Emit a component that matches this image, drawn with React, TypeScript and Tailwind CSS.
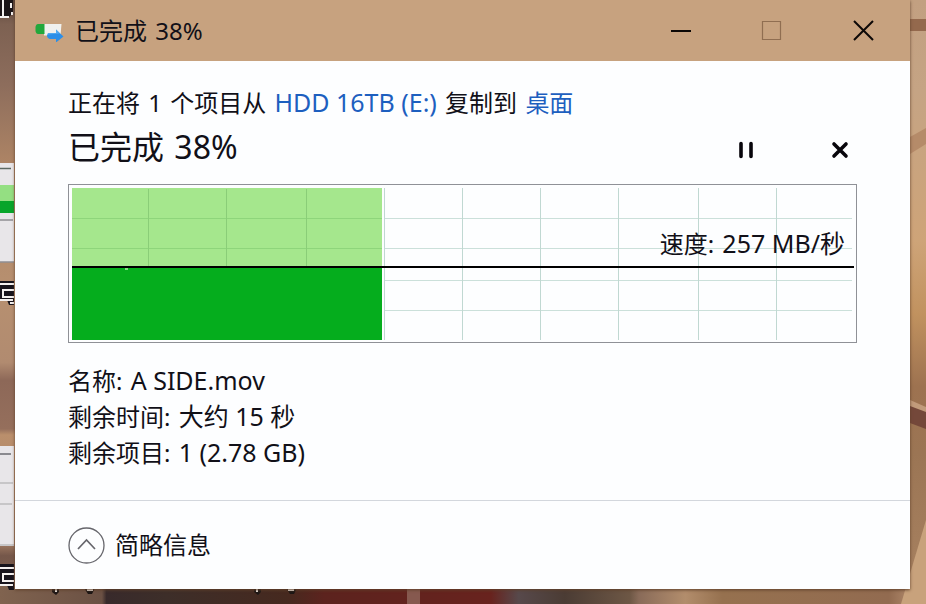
import { useState } from "react";

const details = [
  { label: "名称:", value: "A SIDE.mov" },
  { label: "剩余时间:", value: "大约 15 秒" },
  { label: "剩余项目:", value: "1 (2.78 GB)" },
];

const gridX = [80, 158, 238, 316, 394, 472, 550, 630, 708];
const gridY = [34, 64, 96, 126];

const Wallpaper = () => (
  <svg
    className="absolute inset-0 h-full w-full"
    viewBox="0 0 926 604"
    preserveAspectRatio="xMinYMin slice"
    aria-hidden="true"
  >
    <defs>
      <linearGradient id="left" x1="0" y1="0" x2="0" y2="1">
        <stop offset="0" stopColor="#5a4238" />
        <stop offset="0.04" stopColor="#7d6152" />
        <stop offset="0.14" stopColor="#8d6d5c" />
        <stop offset="0.27" stopColor="#ad8465" />
        <stop offset="0.48" stopColor="#b79070" />
        <stop offset="0.6" stopColor="#b18b70" />
        <stop offset="0.63" stopColor="#8d6858" />
        <stop offset="0.71" stopColor="#956f5c" />
        <stop offset="0.72" stopColor="#ba8f6c" />
        <stop offset="0.9" stopColor="#a07a62" />
        <stop offset="0.92" stopColor="#75574a" />
        <stop offset="1" stopColor="#80634f" />
      </linearGradient>
      <linearGradient id="right" x1="0" y1="0" x2="0" y2="1">
        <stop offset="0" stopColor="#c2a081" />
        <stop offset="0.15" stopColor="#c5a484" />
        <stop offset="0.4" stopColor="#cea478" />
        <stop offset="0.52" stopColor="#c1925f" />
        <stop offset="0.64" stopColor="#9d7250" />
        <stop offset="0.75" stopColor="#9b7554" />
        <stop offset="1" stopColor="#a98362" />
      </linearGradient>
      <linearGradient id="bottom">
        <stop offset="0" stopColor="#80634f" />
        <stop offset="0.11" stopColor="#6b5144" />
        <stop offset="0.115" stopColor="#382a2b" />
        <stop offset="0.18" stopColor="#3d2e29" />
        <stop offset="0.31" stopColor="#46291f" />
        <stop offset="0.35" stopColor="#5c231e" />
        <stop offset="0.53" stopColor="#68231e" />
        <stop offset="0.56" stopColor="#57494b" />
        <stop offset="0.61" stopColor="#4b3c34" />
        <stop offset="0.68" stopColor="#6d5745" />
        <stop offset="0.69" stopColor="#896b59" />
        <stop offset="0.74" stopColor="#b28d6c" />
        <stop offset="0.78" stopColor="#96714f" />
        <stop offset="0.96" stopColor="#926b50" />
        <stop offset="1" stopColor="#c39c7c" />
      </linearGradient>
    </defs>
    <rect width="463" height="604" fill="url(#left)" />
    <rect x="463" width="463" height="604" fill="url(#right)" />
    <rect y="586" width="926" height="18" fill="url(#bottom)" />
    <rect x="407" y="588" width="13" height="16" fill="#86594f" />

    {/* right edge */}
    <path d="M910 19h16v12h-16z" fill="#94694d" />
    <path d="M910 137l16-9v16l-16 10z" fill="#b58b69" />
    <path d="M910 400l16 7v8l-16-6z" fill="#c19b7b" />
    <path d="M910 406l16 6v17l-16-6z" fill="#74483a" />
    <path d="M926 520v84h-25z" fill="#c8a27c" />

    {/* thumbnails under the window */}
    <path d="M0 163h14v99H0z" fill="#e8e6e9" />
    <path d="M0 168.500h11" stroke="#5c6862" strokeWidth="1.500" />
    <path d="M0 185h14v16H0z" fill="#94df82" />
    <path d="M0 201h14v12H0z" fill="#07a52a" />
    <path d="M0 220h13M0 262h14" stroke="#8f8f93" strokeWidth="1.500" />
    <path d="M0 446h14v100H0z" fill="#e8e6e9" />
    <path d="M0 454h11" stroke="#6b6b70" strokeWidth="1.500" />
    <path d="M0 483h13M0 504h12M0 545h14" stroke="#a5a5a8" strokeWidth="1.200" />

    {/* icon captions cut off by the window */}
    <path d="M0 0h13v13l-5 5H0z" fill="#1b1518" />
    <path d="M3 0v16M0 17h9M11 3v5M12 12v3" stroke="#f4f1f0" strokeWidth="2" fill="none" />
    <path d="M0 281h14v24H9l-2-5H0z" fill="#17141c" />
    <path d="M0 284h14M14 290H3v7h11M0 300h13M10 303h4" stroke="#f4f1f0" strokeWidth="2" fill="none" />
    <path d="M0 564h14v26H9l-2-5H0z" fill="#17141c" />
    <path d="M0 568h14M14 574H3v7h11M0 585h13" stroke="#f4f1f0" strokeWidth="2" fill="none" />
    <path d="M52 588h7v4l-3 3-4-3zM84 588h11l-3 6h-4zM254 588h7v4l-3 3-4-3zM286 588h11l-3 6h-4z" fill="#1c1615" />
    <path d="M56 588v4M87 590h6M257 588v4M288 590h6" stroke="#eee9e4" strokeWidth="2" />
  </svg>
);

const CopyIcon = () => (
  <svg width="30" height="22" viewBox="0 0 30 22" aria-hidden="true">
    <path d="M9 4h17.500l-1 11.500H9z" fill="#f0f1ef" />
    <path d="M3 4h6.500v10H3Q1 14 0.500 11V7Q1 4 3 4z" fill="#22a83c" />
    <path d="M13 13h8V9.500l7.500 7-7.500 6V19h-6Q12 18 12 15.500z" fill="#2c8fe8" />
    <path d="M13 13h8V9.500l4 4-12 1z" fill="#52a9ee" />
  </svg>
);

const SpeedChart = () => (
  <div className="relative">
    <svg
      className="block h-[159px] w-full"
      viewBox="0 0 789 159"
      preserveAspectRatio="none"
      role="img"
      aria-label="速度"
    >
      <rect x="0.500" y="0.500" width="788" height="158" fill="#fdfeff" stroke="#8f9197" />
      {gridY.map((y) => (
        <path key={y} d={`M317 ${y + 0.5}H784`} stroke="#cbe0da" />
      ))}
      {gridX.slice(3).map((x) => (
        <path key={x} d={`M${x + 0.5} 4V156`} stroke="#c0d8d2" />
      ))}
      <rect x="4" y="4" width="310" height="79" fill="#a5e78d" />
      {gridY.slice(0, 2).map((y) => (
        <path key={y} d={`M4 ${y + 0.5}H314`} stroke="#8ed57b" />
      ))}
      {gridX.slice(0, 3).map((x) => (
        <path key={x} d={`M${x + 0.5} 5V82`} stroke="#8acd78" />
      ))}
      <rect x="4" y="83" width="310" height="73" fill="#05ad1d" />
      <path d="M4 83H786" stroke="#000" strokeWidth="2" />
      <path d="M57 85h3" stroke="#85dc83" strokeWidth="2" />
    </svg>
    <p className="absolute right-3 top-11 leading-8">
      速度: <span className="ml-0.5 text-[25px] leading-none">257 MB/秒</span>
    </p>
  </div>
);

const App = () => {
  const [expanded, setExpanded] = useState(true);
  const [paused, setPaused] = useState(false);

  return (
    <main className="relative min-h-screen overflow-hidden pb-[15px] pl-[15px] pr-4 font-['Noto_Sans','Noto_Sans_CJK_SC',sans-serif] text-2xl text-[#111018]">
      <Wallpaper />
      <section className="relative bg-[#fdfeff] shadow-[0_1px_3px_#60402a]">
        <header className="flex h-[61px] items-center bg-[#c7a27f] pl-5">
          <CopyIcon />
          <h1 className="ml-2.5 flex-1 leading-8">
            已完成 <span className="ml-0.5">38%</span>
          </h1>
          <div className="flex">
            <button aria-label="最小化" className="flex h-[61px] w-[92px] items-center justify-center">
              <svg width="22" height="22" viewBox="0 0 22 22">
                <path d="M2 11h20" stroke="#0c0806" strokeWidth="2" />
              </svg>
            </button>
            <button aria-label="最大化" disabled className="flex h-[61px] w-[92px] items-center justify-center">
              <svg width="22" height="22" viewBox="0 0 22 22" fill="none">
                <path d="M1.500 1.500h18v18h-18z" stroke="#906e51" strokeWidth="1.200" />
              </svg>
            </button>
            <button aria-label="关闭" className="flex h-[61px] w-[92px] items-center justify-center">
              <svg width="22" height="22" viewBox="0 0 22 22">
                <path d="M1 1l19 19M20 1L1 20" stroke="#0c0806" strokeWidth="2" />
              </svg>
            </button>
          </div>
        </header>

        <div className="px-[53px] pb-[29px] pt-6">
          <p className="leading-9">
            正在将 <span className="mx-0.5">1</span> 个项目从{" "}
            <a href="#source" className="mx-0.5 text-[25px] leading-none text-[#1d5fbf]">HDD 16TB (E:)</a> 复制到{" "}
            <a href="#desktop" className="ml-0.5 text-[#1d5fbf]">桌面</a>
          </p>
          <div className="mb-3 flex h-[51px] items-end">
            <h2 className="flex-1 text-[32px] leading-[51px]">
              已完成 <span className="ml-0.5">38%</span>
            </h2>
            <button
              aria-label={paused ? "继续" : "暂停"}
              onClick={() => setPaused(!paused)}
              className="flex h-[45px] w-[34px] items-center justify-center"
            >
              <svg width="16" height="18" viewBox="0 0 16 18">
                {paused ? (
                  <path d="M2 1l13 8-13 8z" fill="#08060c" />
                ) : (
                  <path d="M3 2.500v13M13 2.500v13" stroke="#08060c" strokeWidth="3.600" strokeLinecap="round" />
                )}
              </svg>
            </button>
            <button aria-label="取消" className="ml-15 flex h-[45px] w-[34px] items-center justify-center">
              <svg width="18" height="18" viewBox="0 0 18 18">
                <path d="M3 3l12 12M15 3L3 15" stroke="#08060c" strokeWidth="3.600" strokeLinecap="round" />
              </svg>
            </button>
          </div>
          <SpeedChart />
          {expanded && (
            <ul className="mt-5 leading-9">
              {details.map((d) => (
                <li key={d.label}>
                  {d.label} <span className="ml-0.5 text-[25px] leading-none">{d.value}</span>
                </li>
              ))}
            </ul>
          )}
        </div>

        <footer className="flex h-[89px] items-center border-t border-[#d3d7dd] px-[53px]">
          <button onClick={() => setExpanded(!expanded)} className="flex items-center gap-2.5">
            <svg
              width="37"
              height="37"
              viewBox="0 0 37 37"
              fill="none"
              className={expanded ? "" : "rotate-180"}
            >
              <circle cx="18.500" cy="18.500" r="17.500" stroke="#66666c" strokeWidth="1.300" />
              <path d="M10 22l8.500-9 8.500 9" stroke="#66666c" strokeWidth="1.700" />
            </svg>
            <span className="leading-9">{expanded ? "简略信息" : "详细信息"}</span>
          </button>
        </footer>
      </section>
    </main>
  );
};

export default App;
